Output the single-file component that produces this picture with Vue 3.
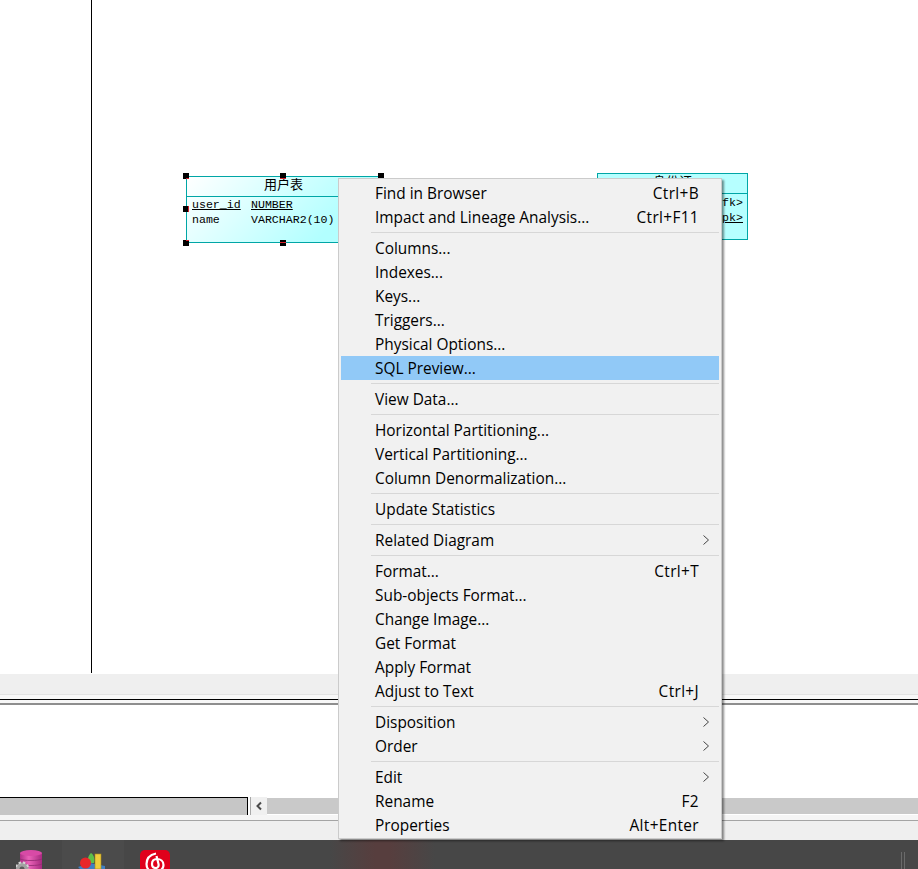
<script setup>
const sections = [
  [
    { label: 'Find in Browser', shortcut: 'Ctrl+B' },
    { label: 'Impact and Lineage Analysis...', shortcut: 'Ctrl+F11' },
  ],
  [
    { label: 'Columns...' },
    { label: 'Indexes...' },
    { label: 'Keys...' },
    { label: 'Triggers...' },
    { label: 'Physical Options...' },
    { label: 'SQL Preview...', active: true },
  ],
  [{ label: 'View Data...' }],
  [
    { label: 'Horizontal Partitioning...' },
    { label: 'Vertical Partitioning...' },
    { label: 'Column Denormalization...' },
  ],
  [{ label: 'Update Statistics' }],
  [{ label: 'Related Diagram', sub: true }],
  [
    { label: 'Format...', shortcut: 'Ctrl+T' },
    { label: 'Sub-objects Format...' },
    { label: 'Change Image...' },
    { label: 'Get Format' },
    { label: 'Apply Format' },
    { label: 'Adjust to Text', shortcut: 'Ctrl+J' },
  ],
  [
    { label: 'Disposition', sub: true },
    { label: 'Order', sub: true },
  ],
  [
    { label: 'Edit', sub: true },
    { label: 'Rename', shortcut: 'F2' },
    { label: 'Properties', shortcut: 'Alt+Enter' },
  ],
]

const handles = ['tl', 'tm', 'tr', 'ml', 'bl', 'bm']
</script>

<template>
  <div class="window">
    <div class="canvas">
      <div class="axis"></div>

      <div class="entity entity-user">
        <div class="entity-title">用户表</div>
        <div class="entity-body">
          <div class="entity-row">
            <span class="col-name linked">user_id</span>
            <span class="linked">NUMBER</span>
          </div>
          <div class="entity-row">
            <span class="col-name">name</span>
            <span>VARCHAR2(10)</span>
          </div>
        </div>
        <i v-for="h in handles" :key="h" :class="['handle', h]"></i>
      </div>

      <div class="entity entity-id">
        <div class="entity-title">身份证</div>
        <div class="entity-body keys">
          <div class="entity-row">&lt;fk&gt;</div>
          <div class="entity-row"><span class="linked">&lt;pk&gt;</span></div>
        </div>
      </div>
    </div>

    <div class="toolbar-band"></div>

    <div class="splitter"></div>

    <div class="output">
      <div class="scroll-row">
        <div class="scroll-left"></div>
        <div class="scroll-btn">
          <svg width="8" height="10" viewBox="0 0 8 10">
            <path d="M6 1.5 2.5 5 6 8.5" fill="none" stroke="#4a4a4a" stroke-width="2" />
          </svg>
        </div>
        <div class="scroll-track"></div>
      </div>
    </div>

    <div class="status-band"></div>

    <div class="taskbar">
      <div class="task-slot">
        <svg width="30" height="19" viewBox="0 0 30 19">
          <defs>
            <linearGradient id="dbFill" x1="0" x2="1">
              <stop offset="0" stop-color="#b02f88" />
              <stop offset="0.4" stop-color="#ea62b8" />
              <stop offset="1" stop-color="#a82a80" />
            </linearGradient>
          </defs>
          <path d="M4 3v16h22V3z" fill="url(#dbFill)" />
          <ellipse cx="15" cy="3" rx="11" ry="3" fill="#d84aa6" />
          <path d="M4 9c3 2 19 2 22 0M4 14c3 2 19 2 22 0" fill="none" stroke="#8f2a70" stroke-width="0.8" />
          <circle cx="6" cy="19" r="6.5" fill="#a2a2a2" />
          <circle cx="6" cy="19" r="6.5" fill="none" stroke="#d4d4d4" stroke-width="2" stroke-dasharray="2.4 2" />
          <circle cx="6" cy="19" r="2.5" fill="#5a5a5a" />
        </svg>
      </div>
      <div class="task-slot current">
        <svg width="30" height="19" viewBox="0 0 30 19">
          <path d="M0 17 12 13l15 3v3H2z" fill="#3f7fc4" />
          <path d="M10 13C9 8 11 5 13 3c3 2 4 6 3 10z" fill="#5cc04a" />
          <rect x="17" y="4" width="6" height="15" fill="#f0cc3c" stroke="#a88a18" stroke-width="0.6" />
          <circle cx="7.5" cy="13" r="5.5" fill="#e8262a" />
        </svg>
      </div>
      <div class="task-slot">
        <div class="music-icon">
          <svg width="30" height="19" viewBox="0 0 30 19">
            <path d="M16 3.500C9 5 6.500 9 6.500 14c0 5 3.500 8 8.500 8s8.500-3 8.500-7c0-4-3-6-6.500-6-3 0-5 2-5 5 0 3 2 4 4 4s3-2 2.500-4L16.500 6" fill="none" stroke="#fff" stroke-width="2.2" />
          </svg>
        </div>
      </div>
      <div class="grip"></div>
    </div>

    <div class="context-menu">
      <template v-for="(section, i) in sections" :key="i">
        <div v-if="i > 0" class="menu-sep"></div>
        <div
          v-for="item in section"
          :key="item.label"
          :class="['menu-item', { active: item.active, 'has-sub': item.sub }]"
        >
          <span>{{ item.label }}</span>
          <span v-if="item.shortcut" class="shortcut">{{ item.shortcut }}</span>
          <svg v-if="item.sub" width="6" height="10" viewBox="0 0 6 10">
            <path d="M.5.5 5.500 5 .5 9.500" fill="none" stroke="#444" stroke-width="1" />
          </svg>
        </div>
      </template>
    </div>
  </div>
</template>

<style>
html,
body {
  margin: 0;
  background: #fff;
}
</style>

<style scoped>
.window {
  position: relative;
  width: 918px;
  height: 869px;
  overflow: hidden;
  display: flex;
  flex-direction: column;
  font-family: "Open Sans", "Noto Sans", sans-serif;
}

.canvas {
  position: relative;
  height: 674px;
  background: #fff;
  flex: none;
}

.axis {
  position: absolute;
  left: 91px;
  top: 0;
  bottom: 1px;
  width: 1px;
  background: #000;
}

.entity {
  position: absolute;
  box-sizing: border-box;
  border: 1px solid #00a6a6;
  background: linear-gradient(135deg, #fff 0%, #b2ffff 75%);
  color: #000;
}

.entity-user {
  left: 186px;
  top: 176px;
  width: 195px;
  height: 67px;
}

.entity-id {
  left: 597px;
  top: 173px;
  width: 151px;
  height: 67px;
  background: #b6ffff;
}

.entity-title {
  height: 19px;
  line-height: 13px;
  border-bottom: 1px solid #00a6a6;
  text-align: center;
  font-family: "Noto Sans CJK SC", sans-serif;
  font-size: 13px;
}

.entity-body {
  padding: 0 0 0 5px;
  font-family: "Liberation Mono", monospace;
  font-size: 11.6px;
  line-height: 15px;
}

.entity-body.keys {
  padding: 1px 4px 0 0;
}

.entity-row {
  display: flex;
  white-space: pre;
}

.entity-body.keys .entity-row {
  justify-content: flex-end;
}

.col-name {
  width: 59px;
}

.linked {
  text-decoration: underline;
}

.handle {
  position: absolute;
  width: 6px;
  height: 6px;
  background: #000;
}

.handle::after {
  content: "";
  position: absolute;
  background: #d8202c;
}

.tl { left: -4px; top: -4px; }
.tl::after { right: 0; bottom: 0; width: 3px; height: 1px; }
.tm { left: 93px; top: -4px; }
.tm::after { left: 0; bottom: 0; width: 6px; height: 1px; }
.tr { right: -4px; top: -4px; }
.tr::after { left: 0; bottom: 0; width: 3px; height: 1px; }
.ml { left: -4px; top: 29px; }
.ml::after { right: 0; top: 0; width: 1px; height: 6px; }
.bl { left: -4px; bottom: -4px; }
.bl::after { right: 0; top: 0; width: 3px; height: 1px; }
.bm { left: 93px; bottom: -4px; }
.bm::after { left: 0; top: 2px; width: 6px; height: 1px; }

.toolbar-band {
  height: 20px;
  flex: none;
  background: #efefef;
}

.splitter {
  height: 11px;
  flex: none;
  box-sizing: border-box;
  background: #f7f7f7;
  border-top: 1px solid #e2e2e2;
  position: relative;
}

.splitter::before,
.splitter::after {
  content: "";
  position: absolute;
  left: 0;
  right: 0;
}

.splitter::before {
  top: 4px;
  height: 1px;
  background: #000;
}

.splitter::after {
  top: 8px;
  height: 2px;
  background: #8e8e8e;
}

.output {
  height: 110px;
  flex: none;
  background: #fff;
  display: flex;
  flex-direction: column;
  justify-content: flex-end;
}

.scroll-row {
  height: 18px;
  display: flex;
  align-items: stretch;
}

.scroll-left {
  width: 248px;
  flex: none;
  box-sizing: border-box;
  background: #c6c6c6;
  border-top: 1px solid #000;
  border-right: 1px solid #000;
}

.scroll-btn {
  margin-left: 2px;
  width: 17px;
  flex: none;
  background: #f0f0f0;
  border-left: 1px solid #a8a8a8;
  box-sizing: border-box;
  display: flex;
  align-items: center;
  justify-content: center;
}

.scroll-track {
  flex: 1;
  margin: 1px 0;
  background: #c9c9c9;
}

.status-band {
  height: 25px;
  flex: none;
  box-sizing: border-box;
  background: linear-gradient(#f5f5f5 0, #f5f5f5 5px, #a4a4a4 5px, #a4a4a4 6px, #efefef 6px);
}

.taskbar {
  position: relative;
  flex: 1;
  display: flex;
  background:
    linear-gradient(to right, transparent 330px, #573e3e 375px, #573e3e 390px, transparent 435px),
    #474747;
}

.task-slot {
  width: 62px;
  flex: none;
  display: flex;
  justify-content: center;
  padding-top: 10px;
  box-sizing: border-box;
}

.task-slot.current {
  background: #4b4b4b;
}

.music-icon {
  width: 30px;
  height: 19px;
  border-radius: 5px 5px 0 0;
  background: #e0001b;
  overflow: hidden;
}

.grip {
  position: absolute;
  left: 901px;
  top: 12px;
  bottom: 0;
  width: 2px;
  border-left: 1px solid #6a6a6a;
  border-right: 1px solid #6a6a6a;
}

.context-menu {
  position: absolute;
  left: 338px;
  top: 178px;
  width: 384px;
  height: 661px;
  box-sizing: border-box;
  padding: 2px;
  background: #f1f1f1;
  border: 1px solid #cbcbcb;
  box-shadow: 2px 2px 2px rgba(0, 0, 0, 0.45);
  color: #000;
  font-size: 15.4px;
}

.menu-item {
  height: 24px;
  display: flex;
  align-items: center;
  justify-content: space-between;
  padding: 0 20px 0 34px;
  white-space: nowrap;
}

.shortcut {
  letter-spacing: 0.35px;
}

.menu-item.active {
  background: #91c9f7;
}

.menu-item.has-sub {
  padding-right: 10px;
}

.menu-sep {
  height: 1px;
  margin: 3px 0 3px 30px;
  background: #d7d7d7;
}
</style>
